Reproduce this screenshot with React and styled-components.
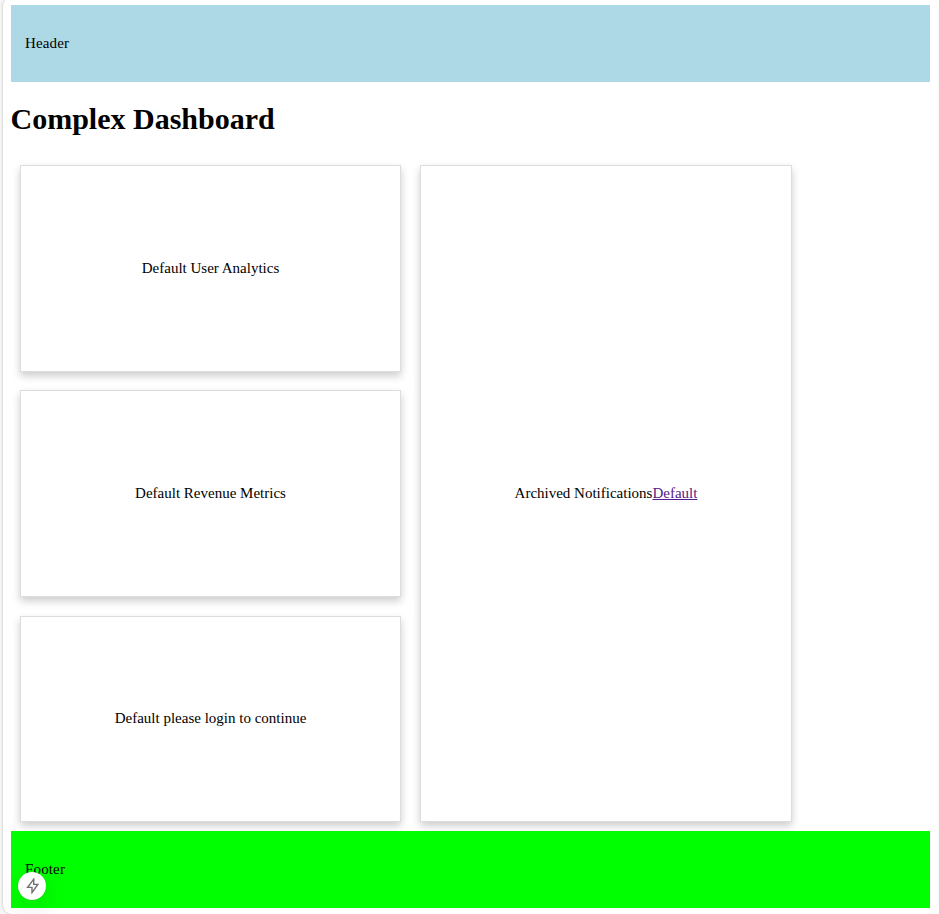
import React from "react";
import styled, { createGlobalStyle } from "styled-components";

const GlobalStyle = createGlobalStyle`
  * { box-sizing: border-box; }
  body {
    margin: 0;
    background: linear-gradient(90deg, #f7f7f7, #fcfcfc);
    color: #000;
    font-family: "Liberation Serif", "Times New Roman", serif;
    font-size: 15px;
    line-height: 17px;
    overflow: hidden;
  }
`;

const Page = styled.div`
  height: 917px;
  margin: -3px 2px 0 3px;
  padding: 8px 7px 6px 8px;
  background: #fff;
  border-radius: 9px;
  box-shadow: -1px 0 2px rgba(0, 0, 0, 0.13);
`;

const Bar = styled.div`
  height: 77px;
  display: flex;
  align-items: center;
  padding: 0 14px;
  letter-spacing: 0.15px;
  background: ${(p) => p.$color};
`;

const Title = styled.h1`
  margin: 19px 0 20px -0.5px;
  font-size: 30px;
  line-height: 35px;
  font-weight: bold;
`;

const Dashboard = styled.main`
  display: flex;
  gap: 19px;
  padding: 9px;
`;

const Column = styled.div`
  width: 381px;
  display: grid;
  grid-template-rows: 207px 207px 206px;
  align-content: start;
  row-gap: 18px;
`;

const Card = styled.section`
  display: flex;
  align-items: center;
  justify-content: center;
  width: ${(p) => p.$width || "auto"};
  height: ${(p) => p.$height || "auto"};
  margin-top: ${(p) => p.$offset || 0};
  padding-bottom: ${(p) => p.$lift || 0};
  background: #fff;
  border: 1px solid #ddd;
  box-shadow: 0 4px 8px rgba(0, 0, 0, 0.2);
`;

const Link = styled.a`
  color: #551a8b;
  text-decoration: underline;
`;

const DevButton = styled.button`
  position: fixed;
  left: 18px;
  top: 872px;
  width: 28px;
  height: 28px;
  padding: 0;
  display: grid;
  place-items: center;
  border: 0;
  border-radius: 50%;
  background: #fff;
  box-shadow: 0 0 1px rgba(0, 0, 0, 0.3), 0 9px 24px rgba(0, 0, 0, 0.12);
`;

export default function App() {
  return (
    <>
      <GlobalStyle />
      <Page>
        <Bar as="header" $color="#add8e6">Header</Bar>
        <Title>Complex Dashboard</Title>
        <Dashboard>
          <Column>
            <Card>Default User Analytics</Card>
            <Card>Default Revenue Metrics</Card>
            <Card $height="206px" $offset="1px" $lift="2px">Default please login to continue</Card>
          </Column>
          <Card $width="372px" $height="657px">
            Archived Notifications<Link href="#">Default</Link>
          </Card>
        </Dashboard>
        <Bar as="footer" $color="#00ff00">Footer</Bar>
      </Page>
      <DevButton aria-label="Development tools">
        <svg width="14" height="16" viewBox="0 0 14 16" fill="none" stroke="#707070" strokeWidth="1.4">
          <path d="M8.7 1.2V6.4h4.1L7 14.6V9.4H2.6z" />
        </svg>
      </DevButton>
    </>
  );
}
